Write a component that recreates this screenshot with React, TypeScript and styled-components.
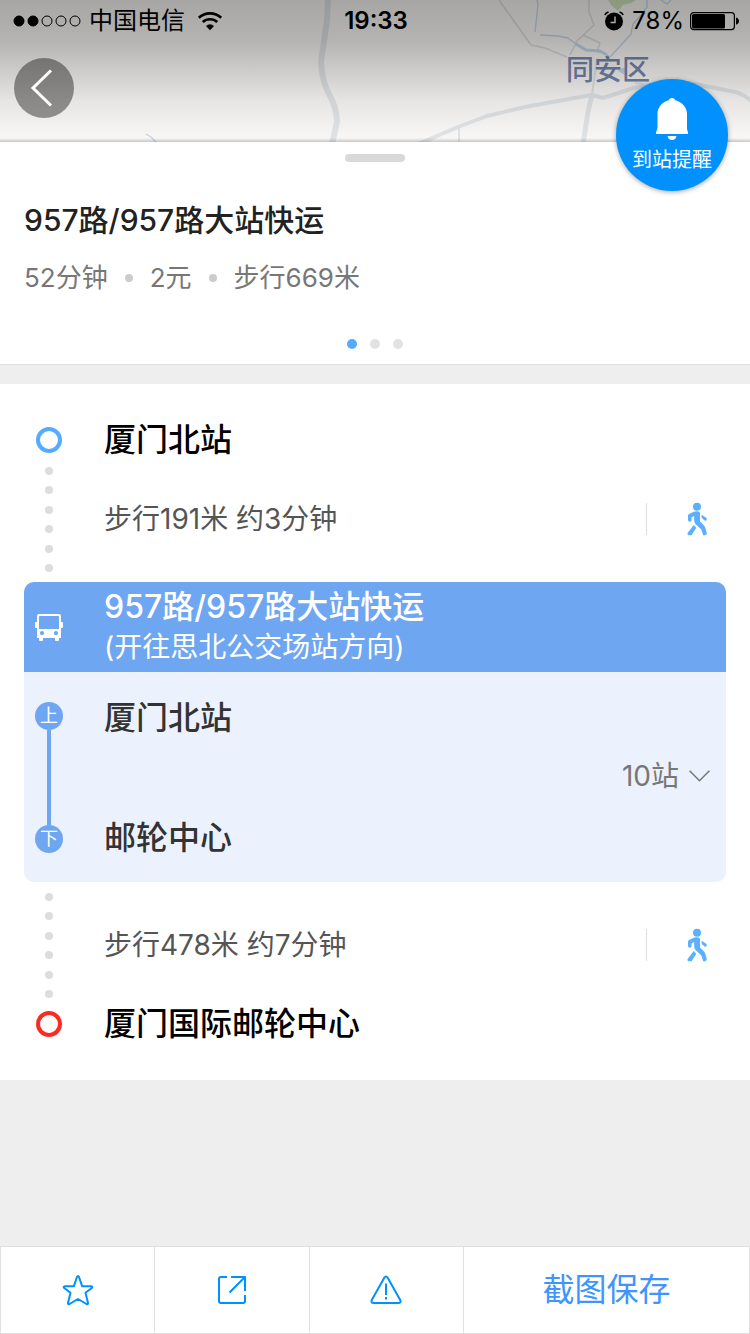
import React from "react";
import styled, { createGlobalStyle } from "styled-components";

const GlobalStyle = createGlobalStyle`
  *, *::before, *::after { box-sizing: border-box; }
  body {
    margin: 0;
    background: #eeeeee;
    font-family: Inter, "Noto Sans CJK SC", sans-serif;
    color: #000;
  }
  button { font: inherit; color: inherit; border: 0; padding: 0; background: none; cursor: pointer; }
  h1, h2, h3, p, ul, ol { margin: 0; padding: 0; font-weight: inherit; list-style: none; }
  svg { display: block; }
`;

const Page = styled.div`
  min-height: 100vh;
  display: flex;
  flex-direction: column;
`;

/* ---------- Map header ---------- */

const MapHeader = styled.header`
  position: relative;
  height: 142px;
  background: #f9f8f6;
`;

const MapCanvas = styled.div`
  position: absolute;
  inset: 0;
  overflow: hidden;

  svg { width: 100%; height: 100%; }

  &::after {
    content: "";
    position: absolute;
    inset: 0;
    background:
      linear-gradient(to top, rgba(0, 0, 0, 0.2), rgba(0, 0, 0, 0) 4px),
      linear-gradient(
        to bottom,
        rgba(0, 0, 0, 0.33) 0,
        rgba(0, 0, 0, 0.28) 40px,
        rgba(0, 0, 0, 0.18) 70px,
        rgba(0, 0, 0, 0.08) 100px,
        rgba(0, 0, 0, 0) 140px
      );
  }
`;

const StatusBar = styled.div`
  position: relative;
  height: 42px;
  padding: 0 11px 0 13px;
  display: grid;
  grid-template-columns: 1fr auto 1fr;
  align-items: center;
  font-size: 24px;
  line-height: 42px;
`;

const StatusGroup = styled.div<{ $end?: boolean }>`
  display: flex;
  align-items: center;
  gap: ${(p) => (p.$end ? 6 : 12)}px;
  justify-content: ${(p) => (p.$end ? "flex-end" : "flex-start")};
`;

const Carrier = styled.span`
  display: flex;
  align-items: center;
  gap: 8px;
`;

const Clock = styled.time`
  font-weight: 600;
`;

const AlarmBattery = styled.span`
  display: flex;
  align-items: center;
  gap: 8px;
`;

const BackButton = styled.button`
  position: relative;
  display: block;
  width: 60px;
  height: 60px;
  margin: 16px 0 0 14px;
  border-radius: 50%;
  background: rgba(0, 0, 0, 0.4);
`;

const ReminderButton = styled.button`
  && { color: #fff; background: #0091ff; }
  position: absolute;
  z-index: 2;
  top: 79px;
  right: 22px;
  width: 112px;
  height: 112px;
  padding-top: 2px;
  border-radius: 50%;
  box-shadow: 0 1px 5px rgba(0, 0, 0, 0.35);
  display: flex;
  flex-direction: column;
  align-items: center;
  justify-content: center;
  gap: 6px;
  font-size: 20px;
  line-height: 28px;
`;

/* ---------- Summary ---------- */

const Summary = styled.section`
  background: #fff;
  border-bottom: 1px solid #e0e0e0;
  padding: 12px 24px 15px;
  display: flex;
  flex-direction: column;
`;

const Handle = styled.div`
  align-self: center;
  width: 60px;
  height: 8px;
  border-radius: 4px;
  background: #d9d9d9;
`;

const SummaryTitle = styled.h1`
  margin-top: 38px;
  font-size: 30px;
  line-height: 40px;
  font-weight: 500;
  color: #222;
`;

const Facts = styled.ul`
  margin-top: 20px;
  display: flex;
  align-items: center;
  font-size: 26px;
  line-height: 36px;
  color: #777;
`;

const Fact = styled.li`
  display: flex;
  align-items: center;

  & + &::before {
    content: "";
    width: 8px;
    height: 8px;
    margin: 0 17px;
    border-radius: 50%;
    background: #ccc;
  }
`;

const Pager = styled.div`
  margin-top: 43px;
  display: flex;
  justify-content: center;
  gap: 13px;
`;

const PagerDot = styled.button<{ $active?: boolean }>`
  && { background: ${(p) => (p.$active ? "#55abff" : "#e2e2e2")}; }
  width: 10px;
  height: 10px;
  border-radius: 50%;
`;

/* ---------- Route ---------- */

const Route = styled.main`
  margin-top: 19px;
  background: #fff;
  padding: 32px 24px;
`;

const Row = styled.div`
  display: grid;
  grid-template-columns: 50px 1fr auto;
  column-gap: 30px;
`;

const StationRow = styled(Row)`
  align-items: center;
  height: 48px;
`;

const Ring = styled.span<{ $color: string }>`
  justify-self: center;
  width: 26px;
  height: 26px;
  border: 4px solid ${(p) => p.$color};
  border-radius: 50%;
`;

const StationName = styled.h2<{ $soft?: boolean }>`
  font-size: 32px;
  line-height: 48px;
  font-weight: 500;
  color: ${(p) => (p.$soft ? "#333" : "#000")};
`;

const WalkRow = styled(Row)`
  height: 110px;
  align-items: center;
`;

const Dots = styled.div`
  align-self: stretch;
  padding: 3px 0 2px;
  display: flex;
  flex-direction: column;
  align-items: center;
  justify-content: space-between;

  i {
    width: 8px;
    height: 8px;
    border-radius: 50%;
    background: #ddd;
  }
`;

const WalkText = styled.p`
  font-size: 28px;
  line-height: 40px;
  color: #555;
`;

const WalkButton = styled.button`
  height: 32px;
  padding: 0 18px 0 39px;
  border-left: 1px solid #ddd;
  display: flex;
  align-items: center;
`;

const BusCard = styled.section`
  margin: 8px 0;
  border-radius: 10px;
  overflow: hidden;
  background: #ebf2fd;
`;

const BusHead = styled(Row)`
  height: 90px;
  align-items: center;
  justify-items: start;
  background: #6fa6f1;
  color: #fff;

  > svg { justify-self: center; }
`;

const BusName = styled.h2`
  font-size: 32px;
  line-height: 40px;
  font-weight: 500;
`;

const BusDirection = styled.p`
  font-size: 28px;
  line-height: 40px;
`;

const BusBody = styled.div`
  padding: 22px 16px 20px 0;
  display: grid;
  grid-template-columns: 50px 1fr;
  column-gap: 30px;
`;

const Track = styled.div`
  padding: 8px 0 9px;
  display: flex;
  flex-direction: column;
  align-items: center;

  &::before {
    content: "";
    order: 1;
    flex: 1;
    width: 4px;
    background: #6fa6f1;
  }
`;

const StopBadge = styled.span<{ $last?: boolean }>`
  order: ${(p) => (p.$last ? 2 : 0)};
  width: 28px;
  height: 28px;
  border-radius: 50%;
  background: #6fa6f1;
  color: #fff;
  font-size: 18px;
  line-height: 28px;
  text-align: center;
`;

const Stops = styled.div`
  display: flex;
  flex-direction: column;
`;

const StopsToggle = styled.button`
  && { color: #777; }
  align-self: flex-end;
  height: 72px;
  padding-bottom: 4px;
  display: flex;
  align-items: center;
  gap: 10px;
  font-size: 28px;
  line-height: 40px;
`;

/* ---------- Bottom bar ---------- */

const BottomBar = styled.nav`
  position: sticky;
  bottom: 0;
  margin-top: auto;
  height: 88px;
  display: flex;
  background: #fff;
  border: 1px solid #e0e0e0;
`;

const BarButton = styled.button<{ $wide?: boolean }>`
  && { color: ${(p) => (p.$wide ? "#4095fc" : "#0091ff")}; }
  flex: ${(p) => (p.$wide ? 13 : 7)} 1 0;
  display: flex;
  align-items: center;
  justify-content: center;
  font-size: 32px;
  line-height: 48px;

  & + & { border-left: 1px solid #e0e0e0; }
`;

/* ---------- Drawings ---------- */

const MapDrawing = () => (
  <svg viewBox="0 0 750 142" preserveAspectRatio="xMidYMid slice" fill="none" strokeLinejoin="round">
    <path d="M608 0l4 6 6 5 5-6 8-2 5-3z" fill="#cfe3bd" />
    <g stroke="#e0e4e6">
      <path d="M328 -2L327 20L321 62Q322 80 328 92Q337 108 337 122L332 144" strokeWidth="6" />
      <path d="M418 144L458 127L487 116L525 107L580 97L592 95L603 98L640 86L690 83L735 92Q744 94 752 102" strokeWidth="4" />
      <path d="M583 144L588 112L592 95" strokeWidth="5" />
      <path d="M592 95L597 58M459 142V128" strokeWidth="2" />
    </g>
    <g stroke="#dcdcde" strokeWidth="1.5">
      <path d="M499 0L531 45L545 48L567 57" />
      <path d="M570 55L577 41L594 25L589 12V0" />
      <path d="M583 35L600 43L597 52" />
    </g>
    <g stroke="#c2d6e8" strokeWidth="1.300">
      <path d="M537 0L538 4L537 14L535 32" />
      <path d="M540 35L558 36L568 38L583 49L600 52L610 57L622 44L631 34L633 24L641 15L647 7V0" />
      <path d="M661 0L667 4L671 0M146 134L151 137L157 143" />
      <path d="M576 44L586 50L600 51L607 55" strokeWidth="3" />
      <path d="M618 70l7 5v-7zM635 83h8" strokeWidth="1" fill="#c2d6e8" />
    </g>
    <text
      x="566"
      y="80"
      fontSize="28"
      fill="#7484ab"
      stroke="#ffffff"
      strokeOpacity="0.3"
      strokeWidth="2"
      paintOrder="stroke"
      fontWeight="500"
    >
      同安区
    </text>
  </svg>
);

const SignalIcon = () => (
  <svg width="68" height="12" viewBox="0 0 68 12" stroke="#000" fill="none">
    {[6, 20, 34, 48, 62].map((x, i) => (
      <circle key={x} cx={x} cy="6" r="5" fill={i < 2 ? "#000" : "none"} />
    ))}
  </svg>
);

const WifiIcon = () => (
  <svg width="26" height="20" viewBox="0 0 26 20" fill="none" stroke="#000" strokeWidth="2.600">
    <path d="M1.800 6.800a16.500 16.500 0 0 1 22.400 0" />
    <path d="M5.800 11a10.600 10.600 0 0 1 14.400 0" />
    <path d="M13 19.200l-4-4.200a6.200 6.200 0 0 1 8 0z" fill="#000" stroke="none" />
  </svg>
);

const AlarmIcon = () => (
  <svg width="20" height="20" viewBox="0 0 20 20" fill="none">
    <circle cx="10" cy="10.500" r="9" fill="#000" />
    <path d="M11 5.500v6H6.500" stroke="#b0b0b0" strokeWidth="1.400" />
    <path d="M.8 4Q1.800 1.800 4.500 1M19.200 4Q18.200 1.800 15.500 1" stroke="#000" strokeWidth="1.600" />
  </svg>
);

const BatteryIcon = () => (
  <svg width="49" height="20" viewBox="0 0 49 20" fill="none">
    <rect x=".6" y="1.600" width="43.800" height="17" rx="3" stroke="#000" strokeWidth="1.200" />
    <rect x="2" y="3" width="33" height="14.400" rx="1.500" fill="#000" />
    <path d="M46 6.500q3 1 3 3.600t-3 3.600z" fill="#000" />
  </svg>
);

const BackIcon = () => (
  <svg width="60" height="60" viewBox="0 0 60 60" fill="none" stroke="#fff" strokeWidth="3">
    <path d="M37 12.500L19 30L37 47.500" />
  </svg>
);

const BellIcon = () => (
  <svg width="32" height="42" viewBox="0 0 32 42" fill="#fff">
    <path d="M16 0c1.500 0 2.600.8 3.200 2.300C26 4 31 9.500 31 16v13c0 2.500.4 3.800 1 5.200V36H0v-1.800c.6-1.400 1.500-2.700 1.500-5.200V16C1.500 9.500 6 4 12.800 2.300 13.400.8 14.500 0 16 0z" />
    <path d="M11.500 38h9c-.4 2.600-2.200 4-4.500 4s-4.100-1.400-4.500-4z" />
  </svg>
);

const BusIcon = () => (
  <svg width="28" height="27" viewBox="0 0 28 27" fill="#fff">
    <path
      fillRule="evenodd"
      d="M4 0h20a2 2 0 0 1 2 2v22H2V2a2 2 0 0 1 2-2zM5 2a1 1 0 0 0-1 1v12h20V3a1 1 0 0 0-1-1zM7 17a2.100 2.100 0 1 0 0 4.200A2.100 2.100 0 0 0 7 17zM21 17a2.100 2.100 0 1 0 0 4.200A2.100 2.100 0 0 0 21 17z"
    />
    <path d="M4 24h4v2q0 1-1 1H5q-1 0-1-1zM20 24h4v2q0 1-1 1h-2q-1 0-1-1zM2 8v6H1q-1 0-1-1V9q0-1 1-1zM26 8v6h1q1 0 1-1V9q0-1-1-1z" />
  </svg>
);

const WalkIcon = () => (
  <svg width="22" height="34" viewBox="0 0 22 34" fill="#5ab0ff">
    <circle cx="11" cy="4.800" r="4" />
    <path d="M8.500 9.600Q13.500 8.400 14 11V19.500L18.300 23.800Q19 24.800 19.500 26.500L20.800 31Q20.900 33 19 33.200H17.200L15.200 27.200L9.500 22Q8.200 20.500 8.200 18.500V14L5.500 15.300V18.500Q4.800 20 3.200 19.600Q2 19.300 2 18V13.500Q2.200 12.300 3.500 11.700Z" />
    <path d="M7.600 23L10.300 25.800L5.500 33.200H2.500Q.8 32.500 1.600 31Z" />
    <path d="M15.600 12.800L20.200 15.800Q21.400 17 20.500 18.200Q19.600 19 18.600 18.400L15.600 15.800Z" />
  </svg>
);

const ChevronDown = () => (
  <svg width="21" height="12" viewBox="0 0 21 12" fill="none" stroke="#777" strokeWidth="1.500">
    <path d="M.6 .8L10.500 10.800L20.400 .8" />
  </svg>
);

const StarIcon = () => (
  <svg width="32" height="32" viewBox="0 0 32 32" fill="none" stroke="currentColor" strokeWidth="2" strokeLinejoin="round">
    <path d="M15 3Q16 1 17 3L20.200 12.300H29Q31.200 12.600 29.800 14L23.500 18.800L26 29Q26 30.800 24.500 30L16 25L7.500 30Q6 30.800 6 29L8.500 18.800L2.200 14Q.8 12.600 3 12.300H11.800Z" />
  </svg>
);

const ShareIcon = () => (
  <svg width="30" height="30" viewBox="0 0 30 30" fill="none" stroke="currentColor" strokeWidth="2" strokeLinejoin="round">
    <path d="M10 2H4Q2 2 2 4V26Q2 28 4 28H26Q28 28 28 26V20" />
    <path d="M14 2H28V16M28 2L12.500 17.500" />
  </svg>
);

const WarningIcon = () => (
  <svg width="32" height="30" viewBox="0 0 32 30" fill="none" stroke="currentColor" strokeWidth="2" strokeLinejoin="round">
    <path d="M14.300 2.800Q16 .4 17.700 2.800L30.500 25.500Q31 28 28.500 28H3.500Q1 28 1.500 25.500Z" />
    <path d="M16 8.500V20M16 22V24.500" />
  </svg>
);

/* ---------- Page ---------- */

const WalkStep = ({ text }: { text: string }) => (
  <WalkRow>
    <Dots aria-hidden="true">
      {Array.from({ length: 6 }, (_, i) => (
        <i key={i} />
      ))}
    </Dots>
    <WalkText>{text}</WalkText>
    <WalkButton aria-label="步行导航">
      <WalkIcon />
    </WalkButton>
  </WalkRow>
);

export default function App() {
  return (
    <Page lang="zh-CN">
      <GlobalStyle />
      <MapHeader>
        <MapCanvas>
          <MapDrawing />
        </MapCanvas>
        <StatusBar>
          <StatusGroup>
            <Carrier>
              <SignalIcon />
              中国电信
            </Carrier>
            <WifiIcon />
          </StatusGroup>
          <Clock>19:33</Clock>
          <StatusGroup $end>
            <AlarmBattery>
              <AlarmIcon />
              78%
            </AlarmBattery>
            <BatteryIcon />
          </StatusGroup>
        </StatusBar>
        <BackButton aria-label="返回">
          <BackIcon />
        </BackButton>
        <ReminderButton>
          <BellIcon />
          到站提醒
        </ReminderButton>
      </MapHeader>

      <Summary>
        <Handle />
        <SummaryTitle>957路/957路大站快运</SummaryTitle>
        <Facts>
          <Fact>52分钟</Fact>
          <Fact>2元</Fact>
          <Fact>步行669米</Fact>
        </Facts>
        <Pager>
          <PagerDot $active aria-label="方案1" />
          <PagerDot aria-label="方案2" />
          <PagerDot aria-label="方案3" />
        </Pager>
      </Summary>

      <Route>
        <StationRow>
          <Ring $color="#55abff" />
          <StationName>厦门北站</StationName>
        </StationRow>
        <WalkStep text="步行191米 约3分钟" />
        <BusCard>
          <BusHead>
            <BusIcon />
            <div>
              <BusName>957路/957路大站快运</BusName>
              <BusDirection>(开往思北公交场站方向)</BusDirection>
            </div>
          </BusHead>
          <BusBody>
            <Track>
              <StopBadge>上</StopBadge>
              <StopBadge $last>下</StopBadge>
            </Track>
            <Stops>
              <StationName $soft>厦门北站</StationName>
              <StopsToggle>
                10站
                <ChevronDown />
              </StopsToggle>
              <StationName $soft>邮轮中心</StationName>
            </Stops>
          </BusBody>
        </BusCard>
        <WalkStep text="步行478米 约7分钟" />
        <StationRow>
          <Ring $color="#fb2a22" />
          <StationName>厦门国际邮轮中心</StationName>
        </StationRow>
      </Route>

      <BottomBar>
        <BarButton aria-label="收藏">
          <StarIcon />
        </BarButton>
        <BarButton aria-label="分享">
          <ShareIcon />
        </BarButton>
        <BarButton aria-label="报错">
          <WarningIcon />
        </BarButton>
        <BarButton $wide>截图保存</BarButton>
      </BottomBar>
    </Page>
  );
}
